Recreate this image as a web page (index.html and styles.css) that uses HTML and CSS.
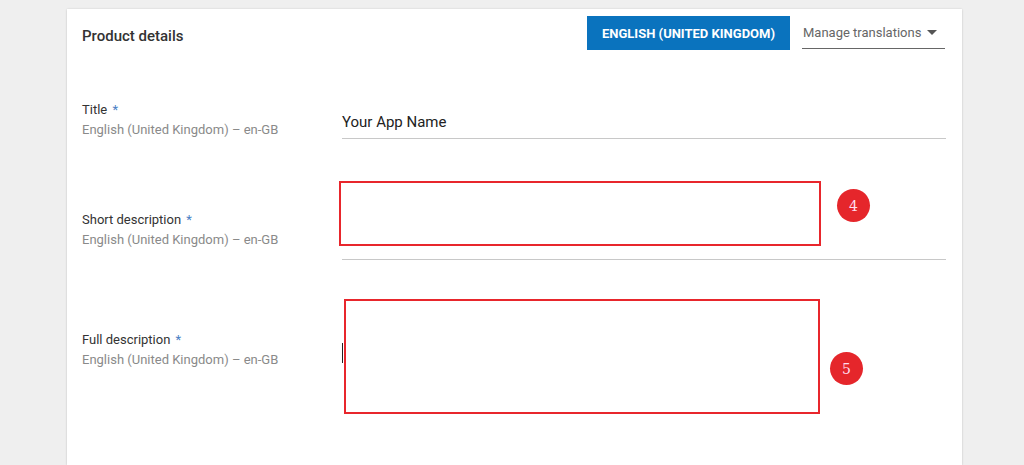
FILE: index.html
```html
<!DOCTYPE html>
<html lang="en">
<head>
<meta charset="utf-8">
<title>Product details</title>
<link rel="stylesheet" href="styles.css">
</head>
<body>
<div class="card">
  <div class="header">
    <h2 class="card-title">Product details</h2>
    <button class="lang-btn">ENGLISH (UNITED KINGDOM)</button>
    <div class="manage">
      <span class="manage-text">Manage translations</span>
      <span class="caret"></span>
    </div>
  </div>

  <div class="row row-title">
    <div class="label">
      <div class="label-name">Title <span class="req">*</span></div>
      <div class="label-sub">English (United Kingdom) – en-GB</div>
    </div>
    <div class="field field-title">Your App Name</div>
  </div>

  <div class="row row-short">
    <div class="label label-low">
      <div class="label-name">Short description <span class="req">*</span></div>
      <div class="label-sub">English (United Kingdom) – en-GB</div>
    </div>
    <div class="field field-short">
      <div class="mark mark-short"></div>
      <div class="badge badge-4">4</div>
    </div>
  </div>

  <div class="row row-full">
    <div class="label label-low">
      <div class="label-name">Full description <span class="req">*</span></div>
      <div class="label-sub">English (United Kingdom) – en-GB</div>
    </div>
    <div class="field field-full">
      <div class="cursor"></div>
      <div class="mark mark-full"></div>
      <div class="badge badge-5">5</div>
    </div>
  </div>
</div>
</body>
</html>
```

FILE: styles.css
```css
html, body {
  margin: 0;
  padding: 0;
}
body {
  background: #efefef;
  font-family: Roboto, "Liberation Sans", sans-serif;
  overflow: hidden;
  height: 465px;
}
.card {
  margin: 9px 0 0 67px;
  width: 895px;
  height: 456px;
  box-sizing: border-box;
  background: #fff;
  box-shadow: 0 0 2px rgba(0, 0, 0, 0.12), 0 1px 2px rgba(0, 0, 0, 0.08);
  padding: 7px 15px 0 15px;
  overflow: hidden;
}
.header {
  display: flex;
  align-items: center;
  height: 34px;
}
.card-title {
  margin: 0;
  padding-top: 6px;
  font-size: 15px;
  font-weight: 500;
  color: #333;
  line-height: 20px;
  white-space: nowrap;
}
.lang-btn {
  margin-left: auto;
  flex-shrink: 0;
  width: 203px;
  height: 34px;
  border: 0;
  background: #0a73be;
  color: #fff;
  font-family: Roboto, "Liberation Sans", sans-serif;
  font-size: 13px;
  font-weight: 700;
  padding: 0;
  white-space: nowrap;
}
.manage {
  margin-left: 12px;
  margin-right: 2px;
  flex-shrink: 0;
  width: 143px;
  height: 33px;
  align-self: flex-start;
  box-sizing: border-box;
  border-bottom: 1px solid #666;
  display: flex;
  align-items: center;
  padding-left: 1px;
  font-size: 13px;
  color: #666;
}
.manage-text {
  white-space: nowrap;
  padding-top: 1px;
}
.caret {
  margin-left: auto;
  margin-right: 8px;
  flex-shrink: 0;
  width: 0;
  height: 0;
  border-left: 5px solid transparent;
  border-right: 5px solid transparent;
  border-top: 5px solid #555;
}
.row {
  display: grid;
  grid-template-columns: 260px 604px;
}
.row-title {
  margin-top: 50px;
}
.label {
  font-size: 13px;
  line-height: 20px;
}
.label-low {
  padding-top: 70px;
}
.label-name {
  color: #333;
}
.req {
  color: #4a80c4;
  margin-left: 2px;
}
.label-sub {
  color: #8a8a8a;
}
.field {
  position: relative;
  box-sizing: border-box;
}
.field-title {
  height: 39px;
  padding-top: 12px;
  font-size: 15px;
  line-height: 20px;
  color: #222;
  border-bottom: 1px solid #c8c8c8;
}
.field-short {
  height: 120px;
  border-bottom: 1px solid #c8c8c8;
}
.field-full {
  height: 190px;
}
.mark {
  position: absolute;
  box-sizing: border-box;
  border: 2px solid #e8262c;
}
.mark-short {
  left: -3px;
  top: 41px;
  width: 482px;
  height: 65px;
}
.mark-full {
  left: 2px;
  top: 39px;
  width: 476px;
  height: 115px;
}
.cursor {
  position: absolute;
  left: 0;
  top: 83px;
  width: 1px;
  height: 20px;
  background: #222;
}
.badge {
  position: absolute;
  width: 33px;
  height: 33px;
  border-radius: 50%;
  background: #e5262b;
  color: #fde;
  font-family: "DejaVu Serif", "Liberation Serif", serif;
  font-size: 14px;
  display: flex;
  align-items: center;
  justify-content: center;
}
.badge-4 {
  left: 495px;
  top: 49px;
}
.badge-5 {
  left: 488px;
  top: 92px;
}
```
